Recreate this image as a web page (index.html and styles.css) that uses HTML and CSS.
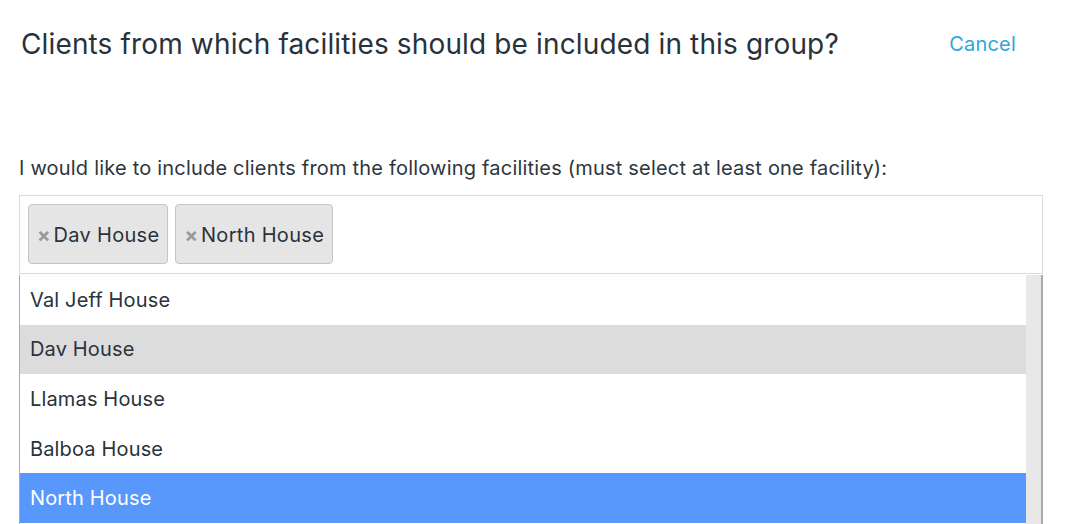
FILE: index.html
```html
<!DOCTYPE html>
<html>
<head>
<meta charset="utf-8">
<link rel="stylesheet" href="styles.css">
</head>
<body>
<div class="page">
  <div class="header">
    <h1 class="title">Clients from which facilities should be included in this group?</h1>
    <a class="cancel">Cancel</a>
  </div>
  <p class="label">I would like to include clients from the following facilities (must select at least one facility):</p>
  <div class="select">
    <div class="choices">
      <span class="tag"><span class="x">×</span>Dav House</span>
      <span class="tag"><span class="x">×</span>North House</span>
    </div>
  </div>
  <div class="dropdown">
    <ul class="options">
      <li class="opt">Val Jeff House</li>
      <li class="opt selected">Dav House</li>
      <li class="opt">Llamas House</li>
      <li class="opt">Balboa House</li>
      <li class="opt highlighted">North House</li>
    </ul>
    <div class="scrollbar"></div>
  </div>
</div>
</body>
</html>
```
FILE: styles.css
```css
html, body {
  margin: 0;
  padding: 0;
  background: #fff;
  overflow: hidden;
}
body {
  font-family: Inter, "Noto Sans", sans-serif;
  color: #2a333c;
}
.page {
  padding: 0 23px 0 19px;
}
.header {
  display: flex;
  justify-content: space-between;
  align-items: flex-start;
  height: 150px;
}
.title {
  margin: 25px 0 0 2px;
  font-size: 28px;
  font-weight: 400;
  letter-spacing: 0.14px;
  line-height: 38px;
  color: #29323b;
}
.cancel {
  margin: 31px 27px 0 0;
  font-size: 20px;
  line-height: 26px;
  letter-spacing: 0.2px;
  color: #2ea7dd;
}
.label {
  margin: 0;
  font-size: 20px;
  letter-spacing: 0.2px;
  line-height: 24px;
  color: #2d363f;
  position: relative;
  top: 6px;
}
.select {
  margin-top: 21px;
  border: 1px solid #dadada;
  height: 79px;
  box-sizing: border-box;
  padding: 8px;
}
.choices {
  display: flex;
  gap: 7px;
}
.tag {
  display: flex;
  align-items: center;
  height: 60px;
  box-sizing: border-box;
  padding: 1px 8px 0 8px;
  background: #e5e5e5;
  border: 1px solid #c4c4c4;
  border-radius: 4px;
  font-size: 20px;
  letter-spacing: 0.3px;
  color: #2a333c;
}
.x {
  color: #999;
  font-weight: 700;
  font-size: 20px;
  margin-right: 3px;
  letter-spacing: 0;
}
.dropdown {
  display: flex;
  margin-top: 1px;
  border-left: 1px solid #aaa;
  border-right: 2px solid #aaa;
  height: 260px;
}
.options {
  flex: 1;
  list-style: none;
  margin: 0;
  padding: 0;
}
.opt {
  height: 49.6px;
  display: flex;
  align-items: center;
  padding-left: 10px;
  font-size: 20px;
  letter-spacing: 0.15px;
  color: #2a333c;
}
.selected {
  background: #dcdcdc;
}
.highlighted {
  background: #5897fb;
  color: #fff;
}
.scrollbar {
  width: 15px;
  background: #e8e8e8;
}
```
